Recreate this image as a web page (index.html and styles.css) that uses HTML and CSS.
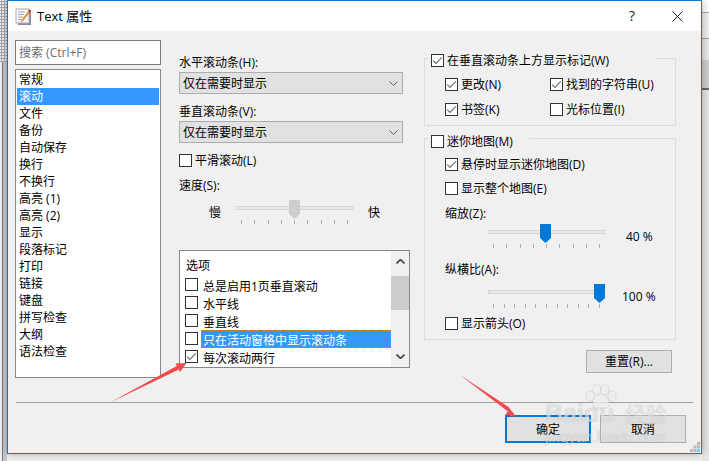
FILE: index.html
```html
<!DOCTYPE html>
<html lang="zh">
<head>
<meta charset="utf-8">
<title>Text 属性</title>
<link rel="stylesheet" href="styles.css">
</head>
<body>
<svg class="defs" width="0" height="0" aria-hidden="true">
  <symbol id="tick" viewBox="0 0 13 13"><path d="M2.200 6.600 5 9.400 10.800 3.400" fill="none" stroke="#707070" stroke-width="1.200"/></symbol>
  <symbol id="chev" viewBox="0 0 9 5"><path d="M.5.5 4.500 4.500 8.500.5" fill="none" stroke="#606060" stroke-width="1"/></symbol>
  <symbol id="chev-bold" viewBox="0 0 9 5"><path d="M.5.5 4.500 4.500 8.500.5" fill="none" stroke="#505050" stroke-width="1.800"/></symbol>
  <symbol id="thumb" viewBox="0 0 11 19"><path d="M0 0H11V14L5.500 19 0 14Z"/></symbol>
</svg>
<div class="desktop">
  <div class="strip strip-left"></div>
  <main class="dialog">
    <header class="titlebar">
      <svg class="app-icon" width="17" height="18" viewBox="0 0 17 18">
        <path d="M3 2H16V17H3Z" fill="#8d8a9c"/>
        <path d="M1 1H14V15H1Z" fill="#f6f6fb" stroke="#a9a7ba"/>
        <path d="M3 4H10M3 6.500H9M3 9H8M3 11.500H6" stroke="#a7a7b6"/>
        <path d="M14.500 1.500 16 3 8 13 5.600 14.600 6.400 12Z" fill="#e9912e"/>
        <path d="M14.500 1.500 16 3 14.600 4.700 13.200 3.200Z" fill="#b3302c"/>
      </svg>
      <span class="title">Text 属性</span>
      <span class="help">?</span>
      <svg class="close" width="11" height="11" viewBox="0 0 11 11"><path d="M.5.5 10.500 10.500M10.500.5 .5 10.500" stroke="#222" stroke-width="1"/></svg>
    </header>

    <div class="content">
      <section class="col-nav">
        <div class="search">搜索 (Ctrl+F)</div>
        <ul class="nav">
          <li>常规</li>
          <li class="selected">滚动</li>
          <li>文件</li>
          <li>备份</li>
          <li>自动保存</li>
          <li>换行</li>
          <li>不换行</li>
          <li>高亮 (1)</li>
          <li>高亮 (2)</li>
          <li>显示</li>
          <li>段落标记</li>
          <li>打印</li>
          <li>链接</li>
          <li>键盘</li>
          <li>拼写检查</li>
          <li>大纲</li>
          <li>语法检查</li>
        </ul>
      </section>

      <section class="col-mid">
        <div class="label first">水平滚动条(H):</div>
        <div class="select">仅在需要时显示<svg class="chev" width="9" height="5"><use href="#chev"/></svg></div>
        <div class="label second">垂直滚动条(V):</div>
        <div class="select">仅在需要时显示<svg class="chev" width="9" height="5"><use href="#chev"/></svg></div>
        <div class="row smooth"><span class="check"></span><span class="text">平滑滚动(L)</span></div>
        <div class="label speed">速度(S):</div>
        <div class="speed-row">
          <span class="speed-end">慢</span>
          <div class="slider">
            <div class="track"></div>
            <svg class="knob knob-speed" width="11" height="19"><use href="#thumb"/></svg>
            <div class="ticks"><i></i><i></i><i></i><i></i><i></i><i></i><i></i><i></i><i></i></div>
          </div>
          <span class="speed-end">快</span>
        </div>
        <div class="options">
          <div class="options-list">
            <div class="options-head">选项</div>
            <div class="opt"><span class="check"></span><span class="opt-text">总是启用1页垂直滚动</span></div>
            <div class="opt"><span class="check"></span><span class="opt-text">水平线</span></div>
            <div class="opt"><span class="check"></span><span class="opt-text">垂直线</span></div>
            <div class="opt"><span class="check"></span><span class="opt-text active">只在活动窗格中显示滚动条</span></div>
            <div class="opt"><span class="check"><svg width="13" height="13"><use href="#tick"/></svg></span><span class="opt-text">每次滚动两行</span></div>
          </div>
          <div class="scrollbar">
            <svg class="arrow-up" width="9" height="5"><use href="#chev-bold"/></svg>
            <div class="scroll-thumb"></div>
            <svg class="arrow-down" width="9" height="5"><use href="#chev-bold"/></svg>
          </div>
        </div>
      </section>

      <section class="col-right">
        <div class="group group-marks">
          <div class="legend legend-marks"><span class="check"><svg width="13" height="13"><use href="#tick"/></svg></span><span class="text">在垂直滚动条上方显示标记(W)</span></div>
          <div class="marks-grid">
            <div class="row"><span class="check"><svg width="13" height="13"><use href="#tick"/></svg></span><span class="text">更改(N)</span></div>
            <div class="row"><span class="check"><svg width="13" height="13"><use href="#tick"/></svg></span><span class="text">找到的字符串(U)</span></div>
            <div class="row"><span class="check"><svg width="13" height="13"><use href="#tick"/></svg></span><span class="text">书签(K)</span></div>
            <div class="row"><span class="check"></span><span class="text">光标位置(I)</span></div>
          </div>
        </div>
        <div class="group group-map">
          <div class="legend legend-map"><span class="check"></span><span class="text">迷你地图(M)</span></div>
          <div class="row"><span class="check"><svg width="13" height="13"><use href="#tick"/></svg></span><span class="text">悬停时显示迷你地图(D)</span></div>
          <div class="row whole"><span class="check"></span><span class="text">显示整个地图(E)</span></div>
          <div class="label zoom">缩放(Z):</div>
          <div class="map-slider s-zoom">
            <div class="slider">
              <div class="track"></div>
              <svg class="knob knob-blue knob-zoom" width="11" height="19"><use href="#thumb"/></svg>
              <div class="ticks"><i></i><i></i><i></i><i></i><i></i><i></i><i></i><i></i><i></i></div>
            </div>
            <span class="value v-zoom">40 %</span>
          </div>
          <div class="label aspect">纵横比(A):</div>
          <div class="map-slider s-aspect">
            <div class="slider">
              <div class="track"></div>
              <svg class="knob knob-blue knob-aspect" width="11" height="19"><use href="#thumb"/></svg>
              <div class="ticks"><i></i><i></i><i></i><i></i><i></i><i></i><i></i><i></i><i></i><i></i><i></i></div>
            </div>
            <span class="value v-aspect">100 %</span>
          </div>
          <div class="row arrows"><span class="check"></span><span class="text">显示箭头(O)</span></div>
        </div>
        <button class="btn btn-reset">重置(R)...</button>
      </section>
    </div>

    <div class="separator"></div>
    <footer class="footer">
      <button class="btn btn-default">确定</button>
      <button class="btn btn-cancel">取消</button>
    </footer>
    <svg class="grip" width="10" height="10" viewBox="0 0 10 10"><path d="M7 0h3v3H7zM3.500 3.500h3v3h-3zM7 3.500h3v3H7zM0 7h3v3H0zM3.500 7h3v3h-3zM7 7h3v3H7z" fill="#b9b9b9"/></svg>
  </main>
  <div class="strip strip-right"></div>

  <svg class="annotations" width="709" height="461" viewBox="0 0 709 461">
    <path d="M110 402.500 176.800 366 175.500 363.500 186.500 363 180 372 178.800 369.600Z" fill="#f24a4a"/>
    <path d="M460 375 511 408.600 508 406.500 516.500 417 505 414.500 508 411.500Z" fill="#f24a4a"/>
  </svg>
  <div class="watermark">
    <svg class="paw" width="30" height="24" viewBox="0 0 30 24">
      <ellipse cx="4" cy="11" rx="3.400" ry="4.200"/><ellipse cx="11" cy="4.500" rx="3.400" ry="4.300"/>
      <ellipse cx="19" cy="4.500" rx="3.400" ry="4.300"/><ellipse cx="26" cy="11" rx="3.400" ry="4.200"/>
      <path d="M15 10c4 0 8 5 8 9 0 4-5 4-8 3-3 1-8 1-8-3 0-4 4-9 8-9Z"/>
    </svg>
    <div class="wm-brand"><span class="wm-logo">Baidu</span><span class="wm-cn">经验</span></div>
    <div class="wm-url">jingyan.baidu.com</div>
  </div>
</div>
</body>
</html>
```

FILE: styles.css
```css
* { box-sizing: border-box; }
html, body { margin: 0; padding: 0; }
body {
  width: 709px;
  height: 461px;
  overflow: hidden;
  font: 12px/16px "Open Sans", "Noto Sans CJK SC", sans-serif;
  color: #000;
}
.defs { position: absolute; }
.desktop {
  position: relative;
  display: flex;
  align-items: flex-start;
  width: 709px;
  height: 461px;
  overflow: hidden;
  background: #f2f2f2;
}
.strip { width: 7px; height: 461px; flex: none; }
.strip-left {
  background: linear-gradient(90deg, #f0f0f0 0 2px, #777 2px 3px, #c9c9c9 3px 7px);
}
.strip-left::before {
  content: "";
  display: block;
  height: 62px;
  background: radial-gradient(circle, #a9a9a9 0 1px, #f0f0f0 1.200px) 0 0 / 3px 3px;
}
.strip-right {
  background: linear-gradient(#fff 0 12px, #a9a9a9 12px 13px, #efefef 13px 38px, #a0a0a0 38px 39px, #e8e8e8 39px 60px, #cfcfcf 60px 88px, #666 88px 90px, #e6e6e6 90px);
}

.dialog {
  position: relative;
  width: 695px;
  height: 454px;
  flex: none;
  background: #f0f0f0;
  border: 1px solid #0a78d0;
  box-shadow: 0 0 8px rgba(0, 0, 0, .32);
  z-index: 1;
}
.titlebar {
  display: flex;
  align-items: center;
  height: 30px;
  padding-left: 7px;
  background: #fff;
}
.app-icon { flex: none; margin-top: 1px; }
.title { margin-left: 5px; font-size: 13px; }
.help { margin-left: auto; font-size: 14px; color: #222; }
.close { margin: 0 18px 0 37px; }

.content {
  display: flex;
  height: 370px;
  padding: 9px 0 0 7px;
}
.col-nav { width: 146px; margin-right: 18px; flex: none; }
.search {
  height: 25px;
  padding-left: 3px;
  line-height: 23px;
  background: #fff;
  border: 1px solid #7a7a7a;
  color: #6d6d6d;
}
.nav {
  list-style: none;
  height: 309px;
  margin: 4px 0 0;
  padding: 1px;
  background: #fff;
  border: 1px solid #828790;
}
.nav li { height: 17px; padding-left: 2px; line-height: 17px; }
.nav .selected { background: #3399ff; color: #fff; }

.col-mid { width: 231px; margin-right: 14px; flex: none; padding-top: 14px; }
.label { height: 16px; line-height: 18px; }
.second { margin-top: 9px; }
.select {
  position: relative;
  height: 22px;
  width: 224px;
  margin-top: 2px;
  padding: 1px 0 0 3px;
  line-height: 20px;
  background: #e1e1e1;
  border: 1px solid #adadad;
}
.chev { position: absolute; right: 4px; top: 8px; }

.row { display: flex; align-items: flex-start; height: 13px; }
.check {
  display: block;
  width: 13px;
  height: 13px;
  flex: none;
  background: #fff;
  border: 1px solid #333;
}
.check svg { display: block; margin: -1px; }
.text { margin: -1px 0 0 3px; white-space: nowrap; }

.smooth { margin-top: 11px; }
.speed { margin-top: 10px; }
.speed-row { display: flex; align-items: flex-start; margin-top: 7px; height: 24px; padding-left: 30px; }
.speed-end { width: 12px; margin-top: 5px; flex: none; }
.speed-row .slider { margin: 0 15px; }

.slider { position: relative; width: 117px; height: 24px; flex: none; }
.track { height: 4px; margin-top: 6px; background: #e7eaea; border: 1px solid #d6d6d6; }
.knob { position: absolute; top: 0; fill: #cdcdcd; }
.knob-blue { fill: #0078d7; }
.knob-speed { left: 53px; }
.knob-zoom { left: 52px; }
.knob-aspect { left: 106px; }
.ticks { display: flex; justify-content: space-between; margin-top: 10px; padding: 0 5px; }
.ticks i { width: 1px; height: 4px; background: #b0b0b0; }

.options {
  display: flex;
  height: 118px;
  margin-top: 26px;
  background: #fff;
  border: 1px solid #828790;
}
.options-list { flex: 1; padding-left: 5px; }
.options-head { height: 27px; padding: 7px 0 0 1px; }
.opt { display: flex; align-items: flex-start; height: 18px; }
.opt-text { height: 18px; margin: -2px 0 0 3px; padding: 3px 2px 0; line-height: 16px; white-space: nowrap; }
.opt-text.active {
  width: 190px;
  background: #3399ff;
  color: #fff;
  outline: 1px dotted #d9822b;
  outline-offset: -1px;
}
.scrollbar {
  display: flex;
  flex-direction: column;
  align-items: center;
  width: 18px;
  background: #f0f0f0;
}
.arrow-up { transform: rotate(180deg); margin-top: 8px; }
.scroll-thumb { width: 100%; height: 34px; margin-top: 12px; background: #cdcdcd; }
.arrow-down { margin-top: 44px; }

.col-right { width: 252px; flex: none; padding-top: 18px; }
.group { position: relative; border: 1px solid #dcdcdc; padding: 19px 0 0 20px; }
.group-marks { height: 68px; }
.group-map { height: 202px; margin-top: 12px; }
.legend {
  position: absolute;
  top: -5px;
  left: 4px;
  height: 14px;
  padding-left: 2px;
  display: flex;
  align-items: flex-start;
  background: #f0f0f0;
}
.legend-marks { width: 226px; }
.legend-map { width: 100px; top: -4px; }
.marks-grid { display: grid; grid-template-columns: 105px 1fr; row-gap: 12px; }

.whole { margin-top: 11px; }
.zoom { margin-top: 10px; }
.map-slider { display: flex; align-items: flex-start; padding-left: 43px; }
.s-zoom { margin-top: 3px; }
.s-aspect { margin-top: 7px; }
.aspect { margin-top: 13px; }
.value { margin-top: 5px; white-space: nowrap; }
.v-zoom { margin-left: 21px; }
.v-aspect { margin-left: 17px; }
.arrows { margin-top: 9px; }

.btn {
  display: block;
  width: 86px;
  height: 28px;
  padding: 0;
  font: inherit;
  color: #000;
  background: #e1e1e1;
  border: 1px solid #adadad;
}
.btn-reset { height: 23px; margin: 10px 0 0 162px; }
.btn-default { border: 2px solid #0078d7; padding-top: 1px; }
.btn-cancel { padding-top: 1px; }

.separator { width: 677px; height: 1px; margin: 1px 0 0 8px; background: #a0a0a0; }
.footer { display: flex; justify-content: flex-end; gap: 9px; margin-top: 12px; padding-right: 15px; }
.grip { position: absolute; right: 1px; bottom: 1px; }

.annotations { position: absolute; left: 0; top: 0; z-index: 2; }
.watermark {
  position: absolute;
  left: 545px;
  top: 385px;
  width: 126px;
  z-index: 3;
  color: rgba(255, 255, 255, .6);
  text-shadow: 0 0 1px rgba(0, 0, 0, .25);
}
.paw {
  position: absolute;
  left: 41px;
  top: 0;
  fill: rgba(255, 255, 255, .72);
  filter: drop-shadow(0 0 1px rgba(0, 0, 0, .3));
}
.wm-brand { display: flex; align-items: center; height: 22px; margin-top: 17px; }
.wm-logo { width: 80px; font: bold 25px/22px "Liberation Sans", sans-serif; }
.wm-cn { font: 21px/22px "Noto Sans CJK SC", sans-serif; }
.wm-url { margin-top: 5px; font: 15px/16px "Liberation Sans", sans-serif; white-space: nowrap; }
```
